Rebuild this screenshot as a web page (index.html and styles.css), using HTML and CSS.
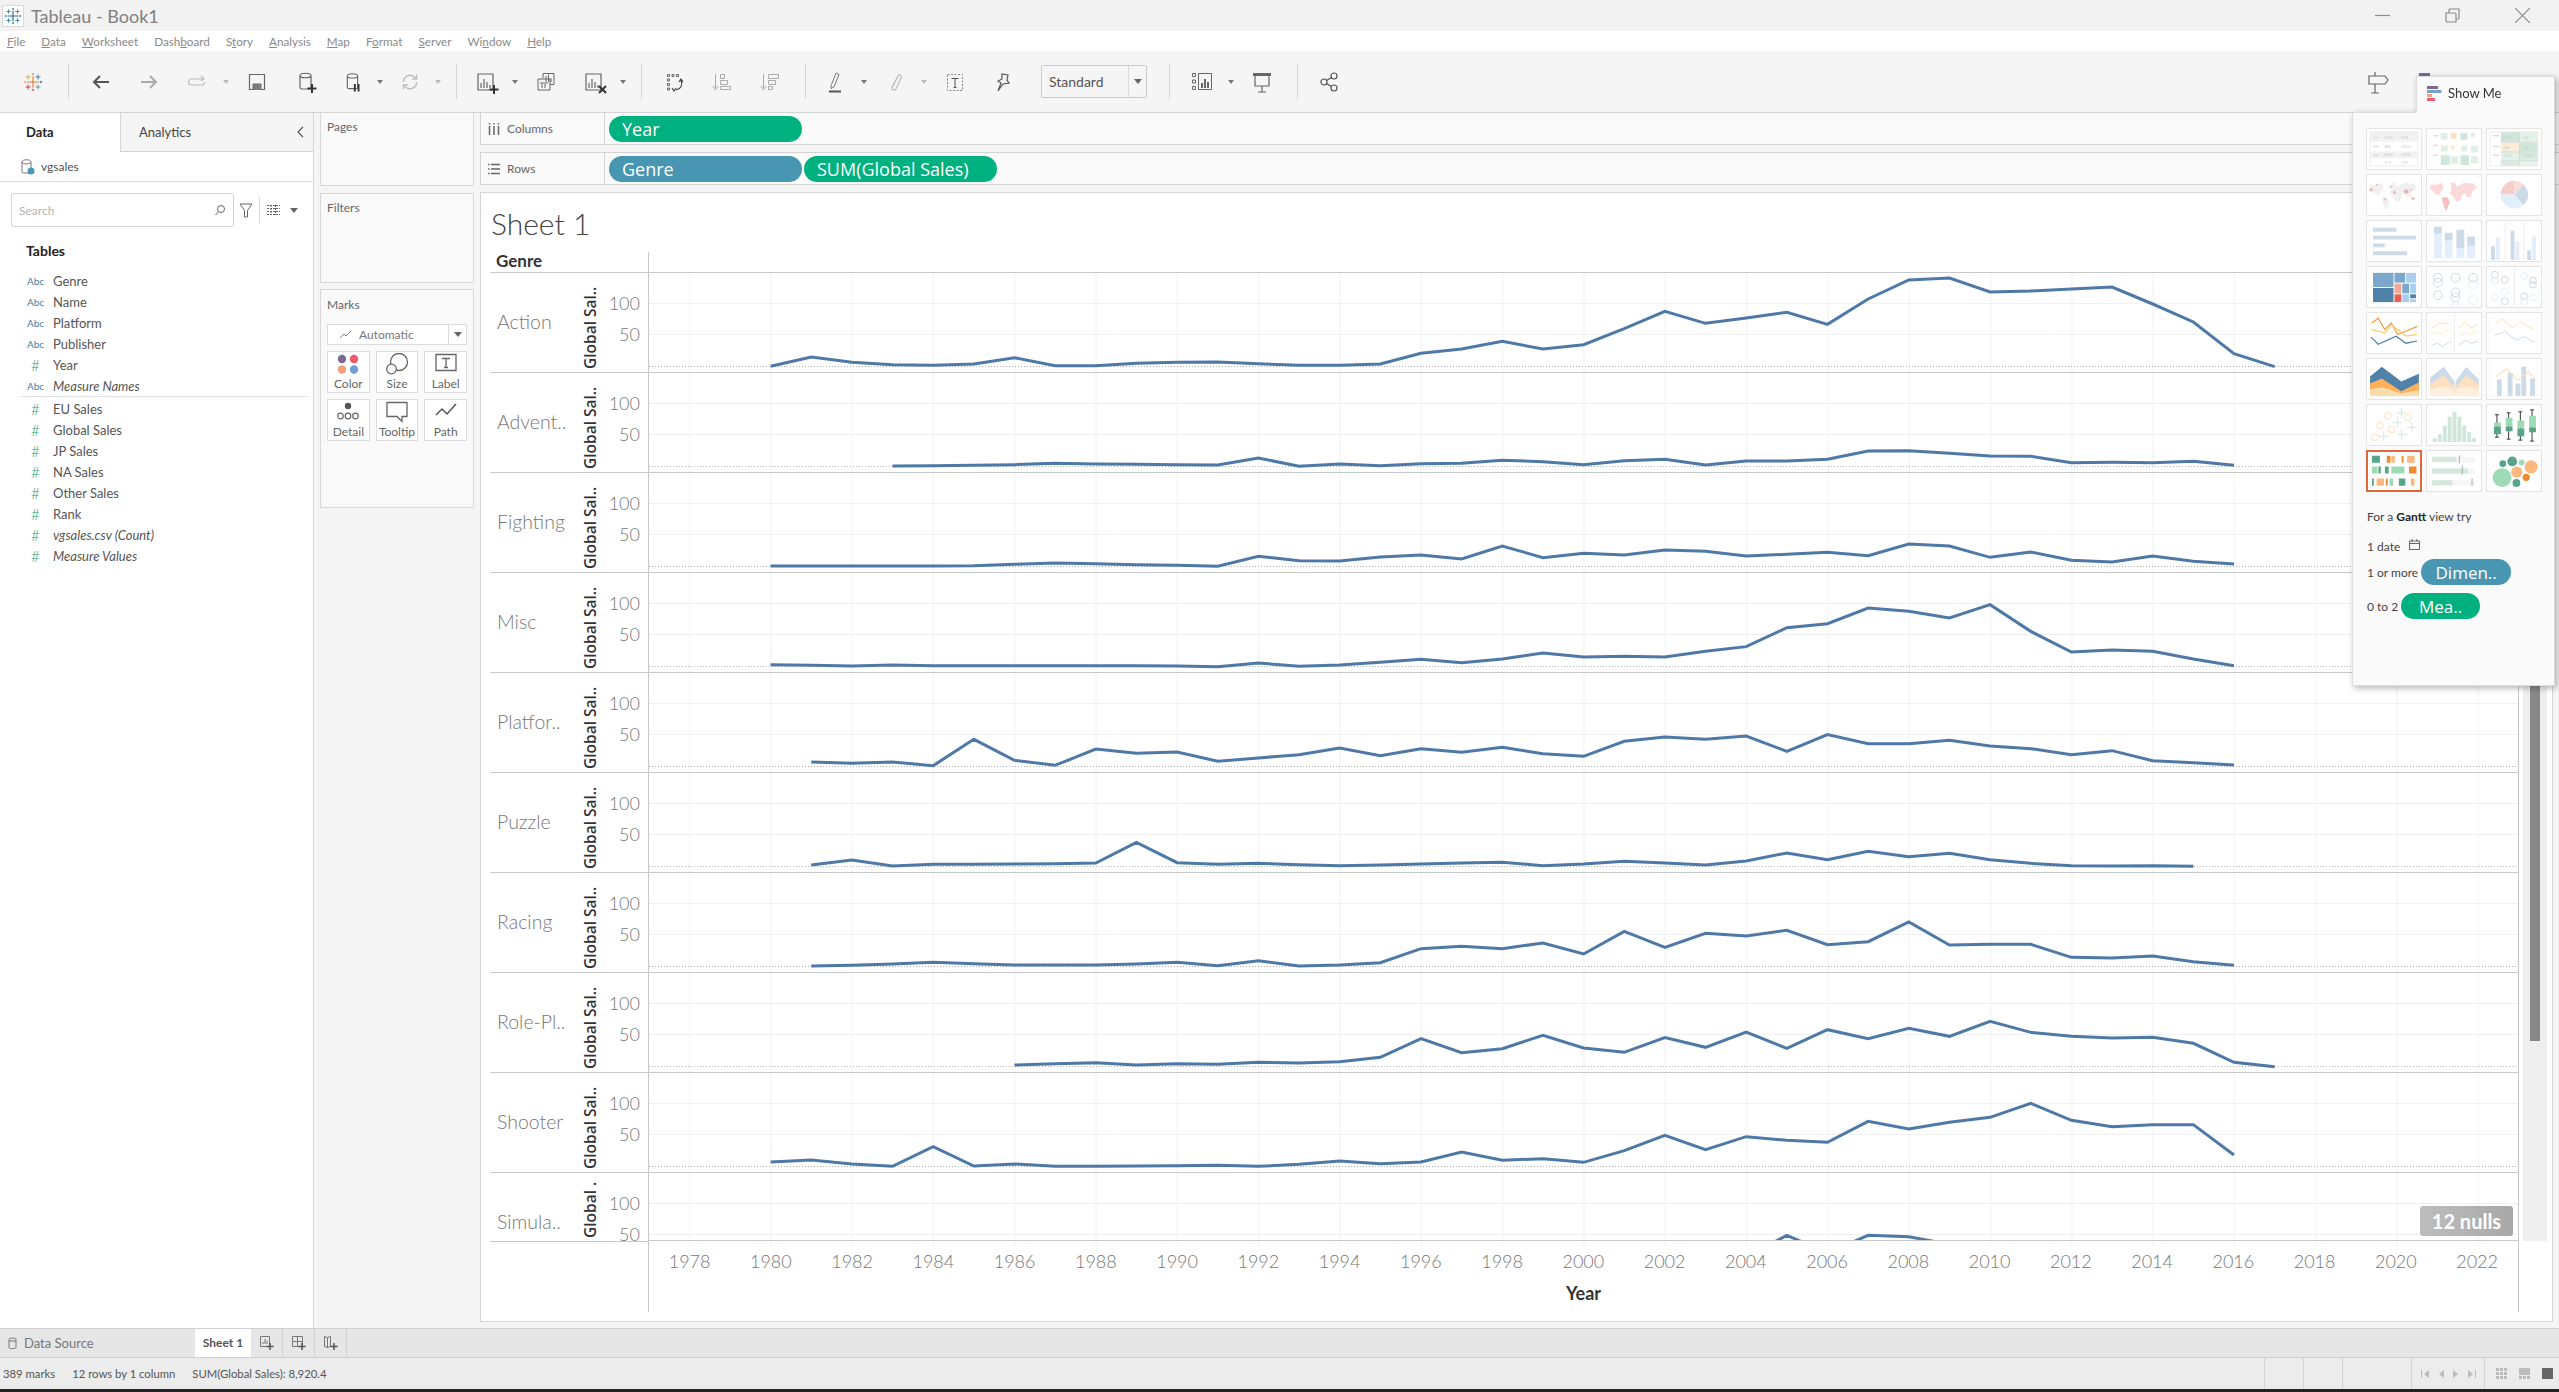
FILE: index.html
```html
<!DOCTYPE html>
<html lang="en">

<head>
    <meta charset="UTF-8">
    <title>Tableau - Book1</title>
    <link rel="stylesheet" href="styles.css">
</head>

<body>
    <svg class="defs" width="0" height="0">
        <symbol id="logo-blue" viewBox="0 0 24 24">
            <path d="M12 5v14M5 12h14" stroke="#2f6f9f" stroke-width="1.6" />
            <path d="M6 3v6M3 6h6M18 3v6M15 6h6M6 15v6M3 18h6M18 15v6M15 18h6" stroke="#3f86ad" stroke-width="1.2" />
            <path d="M12 1v3M10.500 2.500h3M12 20v3M10.500 21.500h3M2.500 10.500v3M1 12h3M21.500 10.500v3M20 12h3" stroke="#2f6f9f" stroke-width="1" />
        </symbol>
        <symbol id="logo-color" viewBox="0 0 24 24">
            <path d="M12 5v14M5 12h14" stroke="#e8762b" stroke-width="1.3" />
            <path d="M6 3v6M3 6h6" stroke="#e8a13b" stroke-width="1" />
            <path d="M18 3v6M15 6h6" stroke="#2f6f9f" stroke-width="1" />
            <path d="M6 15v6M3 18h6" stroke="#c72037" stroke-width="1" />
            <path d="M18 15v6M15 18h6" stroke="#5b879b" stroke-width="1" />
            <path d="M12 1v3M10.500 2.500h3" stroke="#7099a6" stroke-width=".8" />
            <path d="M12 20v3M10.500 21.500h3" stroke="#c72037" stroke-width=".8" />
            <path d="M2.500 10.500v3M1 12h3" stroke="#eb9129" stroke-width=".8" />
            <path d="M21.500 10.500v3M20 12h3" stroke="#1f447a" stroke-width=".8" />
        </symbol>
        <symbol id="cyl" viewBox="0 0 32 32">
            <path d="M11 9.500c0-3 11-3 11 0v12c0 1-1 1.500-2 1.500h-7c-1 0-2-.5-2-1.500zM11 9.500c0 3 11 3 11 0" fill="none" stroke="#666" stroke-width="1.200" />
        </symbol>
        <symbol id="chartbox" viewBox="0 0 32 32">
            <path d="M8 8h15v16H8z" fill="none" stroke="#666" stroke-width="1.200" />
            <path d="M11 22v-5M14 22v-9M17 22v-6M20 22v-3" stroke="#666" stroke-width="1.200" />
        </symbol>
    </svg>

    <header class="titlebar">
        <span class="titlebar__icon"><svg width="18" height="18"><use href="#logo-blue" /></svg></span>
        <span class="titlebar__text">Tableau - Book1</span>
        <div class="winctl">
            <svg width="15" height="15" viewBox="0 0 15 15"><path d="M0 7.500h15" stroke="#8a8a8a" stroke-width="1.200" /></svg>
            <svg width="15" height="15" viewBox="0 0 15 15"><path d="M1 5h9a1 1 0 0 1 1 1v8H2a1 1 0 0 1-1-1zM4 5V2a1 1 0 0 1 1-1h9v9a1 1 0 0 1-1 1h-2" fill="none" stroke="#8a8a8a" stroke-width="1.200" /></svg>
            <svg width="15" height="15" viewBox="0 0 15 15"><path d="M0 0l15 15M15 0L0 15" stroke="#8a8a8a" stroke-width="1.200" /></svg>
        </div>
    </header>

    <nav class="menubar">
        <span><u>F</u>ile</span>
        <span><u>D</u>ata</span>
        <span><u>W</u>orksheet</span>
        <span>Dash<u>b</u>oard</span>
        <span>S<u>t</u>ory</span>
        <span><u>A</u>nalysis</span>
        <span><u>M</u>ap</span>
        <span>F<u>o</u>rmat</span>
        <span><u>S</u>erver</span>
        <span>Wi<u>n</u>dow</span>
        <span><u>H</u>elp</span>
    </nav>

    <div class="toolbar">
        <span class="tool"><svg width="20" height="20"><use href="#logo-color" /></svg></span>
        <i class="sep"></i>
        <span class="tool"><svg width="32" height="32" viewBox="0 0 32 32"><path d="M24 16H9M15 10l-6 6 6 6" fill="none" stroke="#555" stroke-width="2" /></svg></span>
        <span class="tool"><svg width="32" height="32" viewBox="0 0 32 32"><path d="M8 16h15M17 10l6 6-6 6" fill="none" stroke="#aaa" stroke-width="2" /></svg></span>
        <span class="tool tool--menu">
            <svg width="32" height="32" viewBox="0 0 32 32"><path d="M22 13H10.500a2.500 2.500 0 0 0 0 6h11a2.500 2.500 0 0 0 2-3M20 10l3 3-3 2" fill="none" stroke="#bbb" stroke-width="1.200" /></svg>
            <b class="caret caret--off"></b>
        </span>
        <span class="tool"><svg width="32" height="32" viewBox="0 0 32 32"><path d="M8.500 8.500h15v15h-15z" fill="none" stroke="#666" stroke-width="1.200" /><path d="M12 24v-6h8v6M14 24v-4h3v4" fill="#888" stroke="#666" /></svg></span>
        <span class="tool"><svg width="32" height="32" viewBox="0 0 32 32"><use href="#cyl" /><path d="M23 18v9M18.500 22.500h9" stroke="#333" stroke-width="2" /></svg></span>
        <span class="tool tool--menu tool--short">
            <svg width="32" height="32" viewBox="0 0 32 32"><use href="#cyl" /><path d="M19 18v8M23 18v8" stroke="#333" stroke-width="2" /><path d="M18 18h7v9h-7z" fill="none" /></svg>
            <b class="caret"></b>
        </span>
        <span class="tool tool--menu tool--short">
            <svg width="32" height="32" viewBox="0 0 32 32"><path d="M9 16a7 7 0 0 1 12-5l2 2M23 16a7 7 0 0 1-12 5l-2-2M23 8v5h-5M9 24v-5h5" fill="none" stroke="#bbb" stroke-width="1.400" /></svg>
            <b class="caret caret--off"></b>
        </span>
        <i class="sep sep--tight"></i>
        <span class="tool tool--menu">
            <svg width="32" height="32" viewBox="0 0 32 32"><use href="#chartbox" /><path d="M24 19v9M19.500 23.500h9" stroke="#333" stroke-width="2" /></svg>
            <b class="caret"></b>
        </span>
        <span class="tool"><svg width="32" height="32" viewBox="0 0 32 32"><path d="M13 12V7.500h11v11h-4M8 13h12v11H8zM10 17h8M12 18v4M15 18v4" fill="none" stroke="#666" stroke-width="1" /><path d="M16 16V10M18.500 16V8.500M21 16v-4" stroke="#666" /></svg></span>
        <span class="tool tool--menu">
            <svg width="32" height="32" viewBox="0 0 32 32"><use href="#chartbox" /><path d="M21 20l7 7M28 20l-7 7" stroke="#333" stroke-width="2" /></svg>
            <b class="caret"></b>
        </span>
        <i class="sep"></i>
        <span class="tool"><svg width="32" height="32" viewBox="0 0 32 32"><path d="M9.500 8.500h2v2h-2zM14 8.500h2v2h-2zM18.500 8.500h2v2h-2zM9.500 13h2v2h-2zM9.500 17.500h2v2h-2zM9.500 22h2v2h-2z" fill="none" stroke="#666" /><path d="M23 14c2 5 0 9-5 10M14 22l2 3 2-3M21 16l2-3 2 3" fill="none" stroke="#444" stroke-width="1.200" /></svg></span>
        <span class="tool"><svg width="32" height="32" viewBox="0 0 32 32"><path d="M9.500 8v14M7 20l2.500 4L12 20" fill="none" stroke="#aaa" /><path d="M14.500 8.500h4v4h-4zM14.500 14.500h7v4h-7zM14.500 20.500h10v3h-10z" fill="none" stroke="#aaa" /></svg></span>
        <span class="tool"><svg width="32" height="32" viewBox="0 0 32 32"><path d="M9.500 8v14M7 20l2.500 4L12 20" fill="none" stroke="#aaa" /><path d="M14.500 8.500h10v4h-10zM14.500 14.500h7v4h-7zM14.500 20.500h4v3h-4z" fill="none" stroke="#aaa" /></svg></span>
        <i class="sep sep--tight"></i>
        <span class="tool tool--menu">
            <svg width="32" height="32" viewBox="0 0 32 32"><path d="M12 20l5-13 3 1.500-5 12.500-3 1.500z" fill="none" stroke="#777" /><path d="M10 24.500h12v2H10z" fill="#555" /></svg>
            <b class="caret"></b>
        </span>
        <span class="tool tool--menu">
            <svg width="32" height="32" viewBox="0 0 32 32"><path d="M19 10l-6 11c-1 3 3 4 4 2l5-11c1-3-2-4-3-2l-5 10" fill="none" stroke="#bbb" stroke-width="1.200" /></svg>
            <b class="caret caret--off"></b>
        </span>
        <span class="tool"><svg width="32" height="32" viewBox="0 0 32 32"><path d="M8.500 8.500h15v16h-15z" fill="none" stroke="#888" stroke-dasharray="2 1.500" /><path d="M12.500 12.500h7M16 12.500v9M14.500 21.500h3" fill="none" stroke="#555" /></svg></span>
        <span class="tool"><svg width="32" height="32" viewBox="0 0 32 32"><path d="M15 8l6 1-1 5 2 3-6 1-5 7 3-8-3-2 4-2z" fill="none" stroke="#555" stroke-width="1.200" /></svg></span>
        <div class="fit-select"><span class="fit-select__value">Standard</span><span class="fit-select__btn"><b class="caret caret--big"></b></span></div>
        <i class="sep sep--wide"></i>
        <span class="tool tool--menu">
            <svg width="32" height="32" viewBox="0 0 32 32"><path d="M6.500 7.500h3v3h-3zM6.500 14h3v3h-3zM6.500 20.500h3v3h-3zM12.500 7.500h13v16h-13z" fill="none" stroke="#666" /><path d="M16 22v-5M19 22v-9M22 22v-6" stroke="#666" stroke-width="2" /></svg>
            <b class="caret"></b>
        </span>
        <span class="tool"><svg width="32" height="32" viewBox="0 0 32 32"><path d="M7 7h18v3H7z" fill="#666" /><path d="M9 10v10h14V10M16 20v6M12 26h8" fill="none" stroke="#666" stroke-width="1.200" /></svg></span>
        <i class="sep sep--wide"></i>
        <span class="tool"><svg width="32" height="32" viewBox="0 0 32 32"><g fill="none" stroke="#555" stroke-width="1.200"><circle cx="10" cy="16" r="3" /><circle cx="20" cy="10" r="3" /><circle cx="20" cy="22" r="3" /><path d="M12.500 14.500l5-3M12.500 17.500l5 3" /></g></svg></span>
        <span class="tool tool--push"><svg width="32" height="32" viewBox="0 0 32 32"><path d="M7 10h16l3 4-3 4H7zM13 18v9M9 27h8M13 10V6" fill="none" stroke="#666" stroke-width="1.200" /></svg></span>
        <i class="peek"></i>
    </div>

    <main class="workspace">
        <aside class="datapane">
            <div class="datapane__tabs">
                <div class="ptab ptab--on">Data</div>
                <div class="ptab">Analytics<svg class="ptab__chev" width="8" height="12" viewBox="0 0 8 12"><path d="M6 1L1 6l5 5" fill="none" stroke="#555" stroke-width="1.200" /></svg></div>
            </div>
            <div class="source">
                <svg width="14" height="18" viewBox="0 0 14 18"><path d="M1 4c0-3 9-3 9 0v10c0 1-1 1-2 1H3c-1 0-2 0-2-1zM1 4c0 2.500 9 2.500 9 0" fill="none" stroke="#777" /><circle cx="10" cy="13" r="3.500" fill="#4996b2" /></svg>
                <span>vgsales</span>
            </div>
            <div class="searchrow">
                <div class="search">
                    <span>Search</span>
                    <svg width="12" height="12" viewBox="0 0 12 12"><circle cx="7" cy="5" r="3.500" fill="none" stroke="#666" /><path d="M4.500 7.500L1.500 11" stroke="#666" /></svg>
                </div>
                <svg class="search__filter" width="14" height="15" viewBox="0 0 14 15"><path d="M1 1h12L8.500 7.500V14h-3V7.500z" fill="none" stroke="#666" /></svg>
                <i class="searchrow__sep"></i>
                <svg width="13" height="10" viewBox="0 0 13 10"><path d="M0 .5h13M0 3.500h13M0 6.500h13M0 9.500h13M4 0v10M8.500 0v10" stroke="#666" stroke-dasharray="2 1" /></svg>
                <b class="caret caret--big searchrow__caret"></b>
            </div>
            <h3 class="tables-title">Tables</h3>
            <ul class="fields">
                <li><span class="fld fld--dim">Abc</span>Genre</li>
                <li><span class="fld fld--dim">Abc</span>Name</li>
                <li><span class="fld fld--dim">Abc</span>Platform</li>
                <li><span class="fld fld--dim">Abc</span>Publisher</li>
                <li><span class="fld fld--num">#</span>Year</li>
                <li><span class="fld fld--dim">Abc</span><em>Measure Names</em></li>
                <li class="fields__rule"></li>
                <li><span class="fld fld--num">#</span>EU Sales</li>
                <li><span class="fld fld--num">#</span>Global Sales</li>
                <li><span class="fld fld--num">#</span>JP Sales</li>
                <li><span class="fld fld--num">#</span>NA Sales</li>
                <li><span class="fld fld--num">#</span>Other Sales</li>
                <li><span class="fld fld--num">#</span>Rank</li>
                <li><span class="fld fld--num">#</span><em>vgsales.csv (Count)</em></li>
                <li><span class="fld fld--num">#</span><em>Measure Values</em></li>
            </ul>
        </aside>

        <section class="cards">
            <div class="card card--pages">Pages</div>
            <div class="card card--filters">Filters</div>
            <div class="card card--marks">
                Marks
                <div class="marktype">
                    <svg width="14" height="10" viewBox="0 0 14 10"><path d="M1 8l4-4 2 2 5-5" fill="none" stroke="#888" /></svg>
                    <span class="marktype__name">Automatic</span>
                    <span class="marktype__btn"><b class="caret caret--big"></b></span>
                </div>
                <div class="markgrid">
                    <div class="mark">
                        <svg width="24" height="22" viewBox="0 0 24 22"><circle cx="6" cy="6" r="4.200" fill="#7a6a96" /><circle cx="18" cy="6" r="4.200" fill="#f0596e" /><circle cx="6" cy="16.500" r="4.200" fill="#f3a07a" /><circle cx="18" cy="16.500" r="4.200" fill="#6f9fd0" /></svg>
                        Color
                    </div>
                    <div class="mark">
                        <svg width="24" height="22" viewBox="0 0 24 22"><circle cx="14" cy="9" r="8.500" fill="none" stroke="#666" stroke-width="1.300" /><circle cx="6.500" cy="16" r="4.800" fill="#fff" stroke="#666" stroke-width="1.300" /></svg>
                        Size
                    </div>
                    <div class="mark">
                        <svg width="24" height="22" viewBox="0 0 24 22"><path d="M2 1.500h20v16H2z" fill="none" stroke="#666" stroke-width="1.300" /><path d="M8 5.500h8M12 5.500v9M10 14.500h4" fill="none" stroke="#666" stroke-width="1.300" /></svg>
                        Label
                    </div>
                    <div class="mark">
                        <svg width="24" height="22" viewBox="0 0 24 22"><circle cx="12" cy="5" r="3.200" fill="#555" /><g fill="none" stroke="#666" stroke-width="1.200"><circle cx="4.500" cy="15" r="2.800" /><circle cx="12" cy="15" r="2.800" /><circle cx="19.500" cy="15" r="2.800" /></g></svg>
                        Detail
                    </div>
                    <div class="mark">
                        <svg width="24" height="22" viewBox="0 0 24 22"><path d="M2 1.500h20v14h-5v5l-5-5H2z" fill="none" stroke="#666" stroke-width="1.300" /></svg>
                        Tooltip
                    </div>
                    <div class="mark">
                        <svg width="24" height="22" viewBox="0 0 24 22"><path d="M2 14l6-6 5 5 9-10" fill="none" stroke="#555" stroke-width="1.500" /></svg>
                        Path
                    </div>
                </div>
            </div>
        </section>

        <section class="main">
            <div class="shelf shelf--cols">
                <div class="shelf__label">
                    <svg width="12" height="12" viewBox="0 0 12 12"><path d="M1.500 0v1.500M1.500 3v9M6 0v1.500M6 3v9M10.500 0v1.500M10.500 3v9" stroke="#666" stroke-width="1.500" /></svg>
                    Columns
                </div>
                <span class="pill pill--mea">Year</span>
            </div>
            <div class="shelf shelf--rows">
                <div class="shelf__label">
                    <svg width="12" height="12" viewBox="0 0 12 12"><path d="M0 1.500h1.500M3 1.500h9M0 6h1.500M3 6h9M0 10.500h1.500M3 10.500h9" stroke="#666" stroke-width="1.500" /></svg>
                    Rows
                </div>
                <span class="pill pill--dim">Genre</span>
                <span class="pill pill--mea">SUM(Global Sales)</span>
            </div>

            <div class="view">
                <div class="sheet">
                    <h1 class="sheet__title">Sheet 1</h1>
                    <div class="chart">
                        <div class="heads">
                            <div class="heads__top">Genre</div>
                            <div class="hrow"><span class="hrow__name">Action</span><span class="hrow__axis">Global Sal..</span><span class="hrow__ticks">100<br>50</span></div>
                            <div class="hrow"><span class="hrow__name">Advent..</span><span class="hrow__axis">Global Sal..</span><span class="hrow__ticks">100<br>50</span></div>
                            <div class="hrow"><span class="hrow__name">Fighting</span><span class="hrow__axis">Global Sal..</span><span class="hrow__ticks">100<br>50</span></div>
                            <div class="hrow"><span class="hrow__name">Misc</span><span class="hrow__axis">Global Sal..</span><span class="hrow__ticks">100<br>50</span></div>
                            <div class="hrow"><span class="hrow__name">Platfor..</span><span class="hrow__axis">Global Sal..</span><span class="hrow__ticks">100<br>50</span></div>
                            <div class="hrow"><span class="hrow__name">Puzzle</span><span class="hrow__axis">Global Sal..</span><span class="hrow__ticks">100<br>50</span></div>
                            <div class="hrow"><span class="hrow__name">Racing</span><span class="hrow__axis">Global Sal..</span><span class="hrow__ticks">100<br>50</span></div>
                            <div class="hrow"><span class="hrow__name">Role-Pl..</span><span class="hrow__axis">Global Sal..</span><span class="hrow__ticks">100<br>50</span></div>
                            <div class="hrow"><span class="hrow__name">Shooter</span><span class="hrow__axis">Global Sal..</span><span class="hrow__ticks">100<br>50</span></div>
                            <div class="hrow hrow--last"><span class="hrow__name">Simula..</span><span class="hrow__axis">Global .</span><span class="hrow__ticks">100<br>50</span></div>
                        </div>
                        <div class="plot">
                            <div class="plot__top"></div>
                            <div class="plot__body">
                                <svg class="plot__svg" width="1869" height="969" viewBox="0 0 1869 969">
                                    <defs>
                                        <pattern id="vgrid" width="81.3" height="974" patternUnits="userSpaceOnUse">
                                            <path d="M40.650 0v974" stroke="#f0f0f0" />
                                        </pattern>
                                        <pattern id="hgrid" width="1869" height="100" patternUnits="userSpaceOnUse">
                                            <path d="M0 31.500h1869M0 62.500h1869" stroke="#f0f0f0" />
                                            <path d="M0 94.500h1869" stroke="#b5b5b5" stroke-dasharray="1 2" />
                                            <path d="M0 .5h1869" stroke="#c8c8c8" />
                                        </pattern>
                                        <clipPath id="plotclip"><rect width="1869" height="968" /></clipPath>
                                    </defs>
                                    <rect width="1869" height="974" fill="url(#vgrid)" />
                                    <rect width="1869" height="969" fill="url(#hgrid)" />
                                    <path d="M0 968.500h1869" stroke="#c8c8c8" />
                                    <g class="lines" clip-path="url(#plotclip)">
                                        <!-- x is years after 1980, y is in thirds of a pixel under the row top -->
                                        <polyline transform="translate(121.600 0) scale(40.650 .3333)" points="0,283 1,255 2,271 3,278 4,280 5,276 6,257 7,281 8,281 9,274 10,271 11,270 12,275 13,280 14,280 15,276 16,244 17,231 18,208 19,231 20,218 21,170 22,118 23,154 24,138 25,121 26,157 27,81 28,24 29,18 30,60 31,57 32,51 33,45 34,96 35,150 36,245 37,284" />
                                        <polyline transform="translate(121.600 100) scale(40.650 .3333)" points="3,282 4,281 5,280 6,278 7,274 8,276 9,277 10,278 11,279 12,258 13,283 14,276 15,281 16,275 17,274 18,265 19,269 20,278 21,266 22,262 23,279 24,267 25,267 26,262 27,237 28,236 29,244 30,252 31,253 32,272 33,271 34,272 35,268 36,280" />
                                        <polyline transform="translate(121.600 200) scale(40.650 .3333)" points="0,282 1,282 2,282 3,282 4,282 5,281 6,277 7,273 8,275 9,278 10,280 11,283 12,253 13,266 14,267 15,255 16,249 17,261 18,222 19,257 20,244 21,249 22,234 23,238 24,252 25,247 26,241 27,251 28,216 29,222 30,256 31,240 32,265 33,270 34,252 35,268 36,276" />
                                        <polyline transform="translate(121.600 300) scale(40.650 .3333)" points="0,278 1,280 2,282 3,279 4,281 5,281 6,281 7,281 8,281 9,281 10,282 11,284 12,273 13,283 14,279 15,271 16,262 17,272 18,261 19,243 20,255 21,253 22,255 23,238 24,224 25,167 26,155 27,108 28,118 29,138 30,98 31,178 32,240 33,234 34,238 35,261 36,281" />
                                        <polyline transform="translate(121.600 400) scale(40.650 .3333)" points="1,270 2,274 3,270 4,281 5,202 6,265 7,280 8,231 9,244 10,240 11,268 12,258 13,248 14,228 15,251 16,230 17,241 18,226 19,245 20,253 21,208 22,195 23,202 24,192 25,238 26,188 27,215 28,215 29,205 30,222 31,230 32,248 33,236 34,266 35,272 36,279" />
                                        <polyline transform="translate(121.600 500) scale(40.650 .3333)" points="1,279 2,264 3,282 4,277 5,277 6,276 7,275 8,273 9,211 10,272 11,277 12,274 13,278 14,281 15,279 16,276 17,273 18,271 19,281 20,276 21,268 22,273 23,279 24,267 25,243 26,263 27,238 28,254 29,244 30,263 31,274 32,281 33,282 34,281 35,283" />
                                        <polyline transform="translate(121.600 600) scale(40.650 .3333)" points="1,282 2,280 3,276 4,271 5,275 6,279 7,279 8,279 9,276 10,271 11,281 12,266 13,282 14,279 15,272 16,230 17,223 18,230 19,213 20,246 21,178 22,226 23,184 24,192 25,175 26,218 27,209 28,150 29,219 30,217 31,217 32,256 33,258 34,252 35,269 36,280" />
                                        <polyline transform="translate(121.600 700) scale(40.650 .3333)" points="6,279 7,275 8,272 9,279 10,275 11,277 12,271 13,273 14,269 15,256 16,200 17,242 18,230 19,190 20,228 21,241 22,197 23,226 24,180 25,229 26,173 27,200 28,169 29,193 30,148 31,181 32,193 33,198 34,196 35,214 36,271 37,284" />
                                        <polyline transform="translate(121.600 800) scale(40.650 .3333)" points="0,270 1,264 2,276 3,283 4,224 5,282 6,276 7,283 8,283 9,282 10,281 11,280 12,283 13,277 14,267 15,275 16,270 17,240 18,265 19,260 20,271 21,236 22,190 23,233 24,194 25,205 26,211 27,148 28,171 29,151 30,136 31,94 32,145 33,164 34,158 35,158 36,249" />
                                        <polyline transform="translate(121.600 900) scale(40.650 .3333)" points="24,255 25,190 26,243 27,190 28,194 29,217" />
                                    </g>
                                </svg>
                                <span class="nulls">12 nulls</span>
                            </div>
                            <div class="axis">
                                <div class="axis__years">
                                    <span>1978</span><span>1980</span><span>1982</span><span>1984</span><span>1986</span><span>1988</span><span>1990</span><span>1992</span><span>1994</span><span>1996</span><span>1998</span><span>2000</span><span>2002</span><span>2004</span><span>2006</span><span>2008</span><span>2010</span><span>2012</span><span>2014</span><span>2016</span><span>2018</span><span>2020</span><span>2022</span>
                                </div>
                                <div class="axis__title">Year</div>
                            </div>
                        </div>
                    </div>
                </div>
                <div class="vscroll"><div class="vscroll__thumb"></div></div>
            </div>
        </section>

        <aside class="showme">
            <div class="showme__tab">
                <svg width="15" height="15" viewBox="0 0 15 15"><path d="M0 0h11v3H0z" fill="#7a6a96" /><path d="M0 4h14.500v3H0z" fill="#7ba0cc" /><path d="M0 8h5v3H0z" fill="#f3a07a" /><path d="M0 12h8v3H0z" fill="#f0596e" /></svg>
                Show Me
            </div>
            <div class="showme__body">
                <div class="thumbs">
                    <div class="thumb">
                        <svg viewBox="0 0 55 41"><path d="M3 3h49v10H3zM3 23h49v7H3z" fill="#f2f2f2" /><path d="M3 3h49v35H3z" fill="none" stroke="#ececec" /><path d="M6 9h6M6 18h6M6 27h6" stroke="#ddd" stroke-width="1.500" /><g fill="#c9c9c9" font-size="4" font-family="Lato, sans-serif"><text x="17" y="10">1234</text><text x="35" y="10">678</text><text x="17" y="19">368</text><text x="35" y="19">3014</text><text x="17" y="28">2620</text><text x="35" y="28">2598</text><text x="18" y="36">971</text><text x="35" y="36">322</text></g></svg>
                    </div>
                    <div class="thumb">
                        <svg viewBox="0 0 55 41"><path d="M6 7h5M6 17h5M6 27h5" stroke="#ddd" stroke-width="1.500" /><g fill="#e0f0e6"><path d="M14 4h7v7h-7zM14 17h7v6h-7zM35 17h6v6h-6zM45 17h7v7h-7zM24 28h8v8h-8zM45 28h7v7h-7z" /></g><g fill="#cfe6da"><path d="M34 4h7v7h-7zM14 27h9v10h-9zM34 27h9v10h-9z" /></g><path d="M24 4h6v6h-6z" fill="#fde0c0" /><path d="M24 17h4v4h-4z" fill="#fdeacb" /><path d="M45 4h4v4h-4z" fill="#e0f0e6" /></svg>
                    </div>
                    <div class="thumb">
                        <svg viewBox="0 0 55 41"><path d="M14 3h38v35H14z" fill="#e5f2ea" /><path d="M14 3h19v10H14zM33 14h19v9H33z" fill="#cfe6da" /><path d="M14 14h19v9H14z" fill="#feecd6" /><path d="M14 33h19v5H14zM33 23h19v8H33z" fill="#d9ebe1" /><path d="M3 3h49v35H3z" fill="none" stroke="#ececec" /><path d="M6 7h6M6 18h6M6 27h6" stroke="#ddd" stroke-width="1.500" /><path d="M14 13.500h38M14 23.500h38M14 32.500h38M33 3v35" stroke="#c9c9c9" stroke-width=".5" /><g fill="#c3d2c8" font-size="4" font-family="Lato, sans-serif"><text x="16" y="10">1234</text><text x="36" y="10">546</text><text x="16" y="20">368</text><text x="36" y="20">310</text><text x="16" y="29">2620</text><text x="36" y="29">51690</text></g></svg>
                    </div>
                    <div class="thumb">
                        <svg viewBox="0 0 55 41"><path id="world" d="M3 10h6l6-2 2 5-3 5-2 3-4-2-5-5zM15 23h6l2 5-3 8-2-2-2-6zM24 8h5l1 4 8-4 10 1 3 4-5 4-1 5-4 1-2-4-4 2-1 5-4 2-3-6-4-3 2-6z" fill="#f0f0f0" /><g fill="#eeb3b3"><circle cx="4" cy="15" r="1.800" /><circle cx="24" cy="12" r="1.200" /><circle cx="40" cy="17" r="2.400" /><circle cx="45" cy="15" r="1" /><circle cx="10" cy="10" r="1" /><circle cx="28" cy="18" r="1.500" /><circle cx="47" cy="24" r="1.500" /><circle cx="18" cy="25" r="1.100" /></g></svg>
                    </div>
                    <div class="thumb">
                        <svg viewBox="0 0 55 41"><path d="M3 10h6l6-2 2 5-3 5-2 3-4-2-5-5zM15 23h6l2 5-3 8-2-2-2-6zM24 8h5l1 4 8-4 10 1 3 4-5 4-1 5-4 1-2-4-4 2-1 5-4 2-3-6-4-3 2-6z" fill="#fbd9d9" /><path d="M15 23h6l2 5-3 8-2-2-2-6z" fill="#f5c0c0" /></svg>
                    </div>
                    <div class="thumb">
                        <svg viewBox="0 0 55 41"><path d="M28 20V6a14 14 0 0 0-14 14z" fill="#f6cdc8" /><path d="M28 20V6a14 14 0 0 1 9 3.500z" fill="#fbdcd9" /><path d="M28 20l9-10.500A14 14 0 0 1 37 31z" fill="#cddbe8" /><path d="M28 20l9 11A14 14 0 0 1 14 20z" fill="#e2eefa" /></svg>
                    </div>
                    <div class="thumb">
                        <svg viewBox="0 0 55 41"><path d="M6 7h24v4H6zM6 15h44v4H6zM6 23h12v4H6zM6 31h35v4H6z" fill="#cddbe8" /></svg>
                    </div>
                    <div class="thumb">
                        <svg viewBox="0 0 55 41"><path d="M7 13h8v25H7zM18 20h8v18h-8zM30 25h8v13h-8zM41 26h8v12h-8z" fill="#e2eefa" /><path d="M7 6h8v7H7zM18 12h8v8h-8zM30 9h8v19h-8zM41 16h8v10h-8z" fill="#cddbe8" /></svg>
                    </div>
                    <div class="thumb">
                        <svg viewBox="0 0 55 41"><path d="M18.500 1v39M37.500 1v39" stroke="#eee" /><path d="M4 26h4v14H4zM24 10h4v30h-4zM41 30h4v10h-4z" fill="#cddbe8" /><path d="M9 17h4v23H9zM29 21h4v19h-4zM46 16h4v24h-4z" fill="#e2eefa" /></svg>
                    </div>
                    <div class="thumb">
                        <svg viewBox="0 0 55 41"><path d="M6 6h21v14.500H6z" fill="#7ba7cb" /><path d="M6 21.500h21V36H6z" fill="#4f81a9" /><path d="M28 6h11v10H28z" fill="#7ba7cb" /><path d="M40 6h10v10H40z" fill="#a9cfee" /><path d="M28 17h7v10h-7z" fill="#f4a59a" /><path d="M28 28h7v8h-7z" fill="#e26052" /><path d="M36 17h7v10h-7z" fill="#7ba7cb" /><path d="M44 17h6v10h-6z" fill="#a9cfee" /><path d="M36 28h7v8h-7z" fill="#a9cfee" /><path d="M44 28h6v4h-6z" fill="#4f81a9" /><path d="M44 33h6v3h-6z" fill="#a9cfee" /></svg>
                    </div>
                    <div class="thumb">
                        <svg viewBox="0 0 55 41"><g fill="none" stroke="#c6d7e6" stroke-width="1"><circle cx="11" cy="11" r="4.500" /><circle cx="11" cy="16" r="4.500" /><circle cx="29" cy="11" r="4.500" /><circle cx="11" cy="29" r="4.500" /><circle cx="29" cy="26" r="4.500" /><circle cx="29" cy="31" r="4.500" /><circle cx="47" cy="11" r="4.500" /></g><g fill="none" stroke="#e2eefa" stroke-width="1"><circle cx="47" cy="18" r="4.500" /><circle cx="47" cy="34" r="4.500" /><circle cx="29" cy="39" r="3.500" /></g></svg>
                    </div>
                    <div class="thumb">
                        <svg viewBox="0 0 55 41"><path d="M28 0v41" stroke="#eee" /><g fill="none" stroke="#c6d7e6"><circle cx="8" cy="8" r="3.500" /><circle cx="18" cy="13" r="3.500" /><circle cx="18" cy="35" r="3.500" /><circle cx="47" cy="14" r="3.500" /><circle cx="47" cy="18" r="3.500" /><circle cx="38" cy="30" r="3.500" /></g><g fill="none" stroke="#e2eefa"><circle cx="8" cy="14" r="3.500" /><circle cx="8" cy="31" r="3.500" /><circle cx="18" cy="25" r="3.500" /><circle cx="38" cy="9" r="3.500" /><circle cx="47" cy="31" r="3.500" /><circle cx="38" cy="36" r="3.500" /></g></svg>
                    </div>
                    <div class="thumb">
                        <svg viewBox="0 0 55 41"><g fill="none" stroke-width="1.300"><polyline points="4.700,10.300 11.300,5.300 18,17 24.700,10.300 31.300,22 39.700,18.700 51.300,13.700" stroke="#f2a33c" /><polyline points="4.700,17 18,20.300 24.700,12 39.700,23.700 51.300,22" stroke="#f7cb6d" /><polyline points="4,24.700 11.300,32 29.700,23.700 39.700,31 51.300,28.700" stroke="#4f81a9" /></g></svg>
                    </div>
                    <div class="thumb">
                        <svg viewBox="0 0 55 41"><path d="M28 0v41" stroke="#eee" /><g fill="none"><polyline points="4,16 12,11 24,11" stroke="#fde0c0" /><polyline points="32,16 39,9 45,15 52,12" stroke="#fde0c0" /><polyline points="4,22 10,20 16,22 24,14" stroke="#feeecd" /><polyline points="32,24 39,20 45,22 52,19" stroke="#feeecd" /><polyline points="4,34 10,31 16,34 24,29" stroke="#cddbe8" /><polyline points="32,33 39,28 45,31 52,29" stroke="#cddbe8" /></g></svg>
                    </div>
                    <div class="thumb">
                        <svg viewBox="0 0 55 41"><g fill="none"><polyline points="8,11 15,6 26,15 34,9 48,17" stroke="#fde0c0" /><polyline points="8,23 18,19 30,28 38,24 48,30" stroke="#cddbe8" /></g><path d="M2 4v34M51 4v34" stroke="#eee" stroke-dasharray="2 2" /></svg>
                    </div>
                    <div class="thumb">
                        <svg viewBox="0 0 55 41"><path d="M3 38V18L15 8l20 15 18-8v23z" fill="#4f81a9" /><path d="M3 38V25l12-5 20 13 18-9v14z" fill="#ffb05c" /><path d="M3 38v-7l12-2 20 6 18-3v6z" fill="#f8dcaa" /></svg>
                    </div>
                    <div class="thumb">
                        <svg viewBox="0 0 55 41"><path d="M3 38V19L17 8l11 15V38zM29 38V23L40 8l13 13v17z" fill="#cddbe8" /><path d="M3 38V26l14-9 11 12v9zM29 38v-9l11-12 13 9v12z" fill="#fde0c0" /><path d="M3 38v-7l14-3 11 3v7zM29 38v-7l11-3 13 3v7z" fill="#feeedd" /></svg>
                    </div>
                    <div class="thumb">
                        <svg viewBox="0 0 55 41"><path d="M10 21h5v17h-5zM21 14h5v24h-5zM29 25h5v13h-5zM35 8h5v30h-5zM44 20h5v18h-5z" fill="#cddbe8" /><polyline points="9,18 20,10 31,22 42,13 50,22" fill="none" stroke="#fde0c0" stroke-width="1.200" /><path d="M3 4v34M51 4v34" stroke="#eee" stroke-dasharray="2 2" /></svg>
                    </div>
                    <div class="thumb">
                        <svg viewBox="0 0 55 41"><g fill="none" stroke="#fde0c0"><circle cx="21" cy="11" r="3.500" /><circle cx="42" cy="13" r="3.500" /><circle cx="13" cy="21" r="3.500" /><circle cx="25" cy="25" r="3.500" /><circle cx="8" cy="33" r="3.500" /></g><path d="M35 3v10M30 8h10M31 13v10M26 18h10M46 18v10M41 23h10M35 25v10M30 30h10M17 27v10M12 32h10" stroke="#d3e7dc" /></svg>
                    </div>
                    <div class="thumb">
                        <svg viewBox="0 0 55 41"><path d="M6 34h4v4H6zM11 30h4v8h-4zM16 21h4v17h-4zM21 12h4v26h-4zM26 7h4v31h-4zM31 12h4v26h-4zM36 21h4v17h-4zM41 28h4v10h-4zM46 34h4v4h-4z" fill="#cfe6da" /></svg>
                    </div>
                    <div class="thumb">
                        <svg viewBox="0 0 55 41"><path d="M10 10v23M8 10h4M8 33h4M22 8v27M20 8h4M20 35h4M34 7v29M32 7h4M32 36h4M46 5v32M44 5h4M44 37h4" stroke="#333" /><path d="M7 18h7v4H7zM19 13h7v9h-7zM31 16h7v8h-7zM43 11h7v12h-7z" fill="#9ddab5" /><path d="M7 22h7v8H7zM19 22h7v5h-7zM31 24h7v8h-7zM43 23h7v5h-7z" fill="#57a586" /></svg>
                    </div>
                    <div class="thumb thumb--on">
                        <svg viewBox="0 0 55 41"><g fill="#57a586"><path d="M3.700 4h8.600v7.700H3.700zM10.700 15.700h2.600v7.600h-2.600zM17.700 15.700h4v7.600h-4zM3.700 28.700h2v7.600h-2zM32.700 28.700h7v7.600h-7z" /></g><g fill="#ef8b2c"><path d="M19.700 4h4v7.700h-4zM35.700 4h2v7.700h-2zM43.700 15.700h8v7.600h-8zM18.700 28.700h2v7.600h-2z" /></g><g fill="#fdb97d"><path d="M24.700 4h3.600v7.700h-3.600zM41.700 4h8v7.700h-8zM8.700 28.700h8v7.600h-8zM45.700 28.700h4v7.600h-4z" /></g><g fill="#9ddab5"><path d="M3.700 15.700h6v7.600h-6zM24.700 15.700h14v7.600h-14zM22.700 28.700h4v7.600h-4z" /></g></svg>
                    </div>
                    <div class="thumb">
                        <svg viewBox="0 0 55 41"><path d="M5 6h44v6H5zM5 18h44v6H5zM5 30h44v5H5z" fill="#f6f6f6" /><path d="M5 6h25v5H5zM5 18h37v5H5zM5 30h21v5H5z" fill="#d3e7dc" /><path d="M33 4.500v8M36 15v9M46 28v8" stroke="#aaa" /></svg>
                    </div>
                    <div class="thumb">
                        <svg viewBox="0 0 55 41"><circle cx="15.300" cy="27.300" r="9.700" fill="#9ddab5" /><circle cx="25.700" cy="10.700" r="5" fill="#57a586" /><circle cx="16" cy="13" r="3.400" fill="#57a586" /><circle cx="35.300" cy="11.700" r="3" fill="#9ddab5" /><circle cx="45" cy="16.300" r="6.700" fill="#fdb97d" /><circle cx="30.300" cy="21.700" r="5.700" fill="#fdb97d" /><circle cx="40" cy="27" r="3.700" fill="#ef8b2c" /><circle cx="30" cy="32.700" r="4" fill="#57a586" /></svg>
                    </div>
                </div>
                <div class="hint">
                    <p class="hint__head">For a <b>Gantt</b> view try</p>
                    <p class="hint__row">1 date <svg width="11" height="11" viewBox="0 0 11 11"><path d="M.5 2h10v8.500H.5zM.5 4.500h10M3 0v3M8 0v3" fill="none" stroke="#666" /></svg></p>
                    <p class="hint__row hint__row--pill">1 or more <span class="pill pill--dim pill--dimen">Dimen..</span></p>
                    <p class="hint__row hint__row--pill">0 to 2 <span class="pill pill--mea pill--mea-hint">Mea..</span></p>
                </div>
            </div>
        </aside>
    </main>

    <div class="tabbar">
        <div class="tabbar__source">
            <svg width="9" height="13" viewBox="0 0 9 13"><path d="M1 2.500c0-2 7-2 7 0v8c0 1.500-7 1.500-7 0zM1 4h7" fill="none" stroke="#777" /></svg>
            Data Source
        </div>
        <div class="tabbar__sheet">Sheet 1</div>
        <div class="tabbar__add"><svg width="16" height="16" viewBox="0 0 16 16"><path d="M1.500 1.500h9v10h-9z" fill="none" stroke="#777" /><path d="M4 9V7M6 9V4M8 9V6" stroke="#777" /><path d="M11 8v7M7.500 11.500h7" stroke="#555" stroke-width="1.500" /></svg></div>
        <div class="tabbar__add"><svg width="16" height="16" viewBox="0 0 16 16"><path d="M1.500 1.500h10v10h-10zM6.500 1.500v10M1.500 6.500h10" fill="none" stroke="#777" /><path d="M11 8v7M7.500 11.500h7" stroke="#555" stroke-width="1.500" /></svg></div>
        <div class="tabbar__add"><svg width="16" height="16" viewBox="0 0 16 16"><path d="M1.500 1.500l3 1 3-1v10l-3 1-3-1zM4.500 2.500v10" fill="none" stroke="#777" /><path d="M11 8v7M7.500 11.500h7" stroke="#555" stroke-width="1.500" /></svg></div>
    </div>

    <footer class="status">
        <span class="status__item">389 marks</span>
        <span class="status__item">12 rows by 1 column</span>
        <span class="status__item">SUM(Global Sales): 8,920.4</span>
        <div class="status__right">
            <i class="status__cell"></i>
            <i class="status__cell"></i>
            <i class="status__cell status__cell--wide"></i>
            <div class="status__nav">
                <svg width="8" height="8" viewBox="0 0 8 8"><path d="M0 0h1v8H0zM8 0v8L3 4z" fill="#bbb" /></svg>
                <svg width="6" height="8" viewBox="0 0 6 8"><path d="M6 0v8L1 4z" fill="#bbb" /></svg>
                <svg width="6" height="8" viewBox="0 0 6 8"><path d="M0 0v8l5-4z" fill="#bbb" /></svg>
                <svg width="8" height="8" viewBox="0 0 8 8"><path d="M7 0h1v8H7zM0 0v8l5-4z" fill="#bbb" /></svg>
            </div>
            <div class="status__views">
                <svg width="11" height="11" viewBox="0 0 11 11"><path d="M0 0h3v3H0zM4 0h3v3H4zM8 0h3v3H8zM0 4h3v3H0zM4 4h3v3H4zM8 4h3v3H8zM0 8h3v3H0zM4 8h3v3H4zM8 8h3v3H8z" fill="#bbb" /></svg>
                <svg width="11" height="11" viewBox="0 0 11 11"><path d="M0 0h11v7H0zM0 8h3v3H0zM4 8h3v3H4zM8 8h3v3H8z" fill="#bbb" /></svg>
                <svg width="11" height="11" viewBox="0 0 11 11"><path d="M0 0h11v11H0z" fill="#666" /></svg>
            </div>
        </div>
    </footer>
</body>

</html>
```

FILE: styles.css
```css
html {
    box-sizing: border-box;
}

*,
*:before,
*:after {
    box-sizing: inherit;
}

body {
    margin: 0;
    width: 2559px;
    height: 1392px;
    overflow: hidden;
    display: flex;
    flex-direction: column;
    font-family: 'Lato', 'Open Sans', sans-serif;
    font-size: 12px;
    color: #555;
    background: #222;
}

.defs {
    position: absolute;
}

/* title + menu */

.titlebar {
    height: 31px;
    flex: none;
    display: flex;
    align-items: center;
    background: #f2f2f2;
    padding-left: 2px;
}

.titlebar__icon {
    width: 22px;
    height: 22px;
    margin-right: 7px;
    display: flex;
    align-items: center;
    justify-content: center;
    background: #fff;
    border: 1px solid #d8d8d8;
}

.titlebar__text {
    font-size: 18px;
    color: #808080;
}

.winctl {
    margin-left: auto;
    margin-right: 29px;
    display: flex;
    gap: 55px;
}

.menubar {
    height: 20px;
    flex: none;
    display: flex;
    align-items: center;
    gap: 16px;
    padding-left: 7px;
    background: #fff;
    color: #8a8a8a;
    font-size: 11.7px;
}

/* toolbar */

.toolbar {
    height: 61px;
    flex: none;
    display: flex;
    align-items: center;
    gap: 16px;
    padding: 0 129px 0 17px;
    background: #f5f5f5;
}

.tool {
    width: 32px;
    height: 32px;
    flex: none;
    display: flex;
    align-items: center;
    justify-content: center;
}

.tool--menu {
    width: 44px;
    justify-content: flex-start;
}

.tool--short {
    width: 42px;
}

.tool--push {
    margin-left: auto;
}

.caret {
    display: block;
    flex: none;
    width: 0;
    height: 0;
    margin: 0 -4px 0 10px;
    border-left: 3px solid transparent;
    border-right: 3px solid transparent;
    border-top: 4px solid #777;
}

.caret--off {
    border-top-color: #bbb;
}

.caret--big {
    margin: 0;
    border-left-width: 4px;
    border-right-width: 4px;
    border-top-width: 5px;
    border-top-color: #666;
}

.sep {
    width: 1px;
    height: 35px;
    flex: none;
    margin-left: 3px;
    background: #d4d4d4;
}

.sep--tight {
    margin-right: -3px;
}

.sep--wide {
    margin-right: 0;
}

.peek {
    width: 11px;
    height: 3px;
    flex: none;
    align-self: flex-start;
    margin: 22px 0 0 9px;
    background: #7a6a96;
}

.fit-select {
    width: 106px;
    height: 33px;
    flex: none;
    margin: 0 3px 0 6px;
    display: flex;
    align-items: center;
    border: 1px solid #c9c9c9;
    border-radius: 2px;
    font-size: 14px;
    color: #555;
}

.fit-select__value {
    flex: 1;
    padding-left: 7px;
}

.fit-select__btn {
    width: 18px;
    height: 100%;
    display: flex;
    align-items: center;
    justify-content: center;
    border-left: 1px solid #dcdcdc;
}

/* workspace */

.workspace {
    position: relative;
    height: 1216px;
    flex: none;
    display: grid;
    grid-template-columns: 314px 166px 1fr;
    border-top: 1px solid #d4d4d4;
    background: #f5f5f5;
}

.datapane {
    background: #fff;
    border-right: 1px solid #d4d4d4;
    display: flex;
    flex-direction: column;
}

.datapane__tabs {
    display: flex;
    height: 39px;
    flex: none;
}

.ptab {
    position: relative;
    flex: 1;
    padding-left: 18px;
    line-height: 38px;
    font-size: 13px;
    color: #444;
    background: #f5f5f5;
    border-left: 1px solid #d4d4d4;
    border-bottom: 1px solid #d4d4d4;
}

.ptab--on {
    flex: 0 0 120px;
    padding-left: 26px;
    font-weight: 700;
    color: #222;
    background: #fff;
    border: 0;
}

.ptab__chev {
    position: absolute;
    right: 8px;
    top: 13px;
}

.source {
    height: 30px;
    flex: none;
    display: flex;
    align-items: center;
    gap: 6px;
    padding-left: 21px;
    border-bottom: 1px solid #dcdcdc;
}

.searchrow {
    height: 45px;
    flex: none;
    display: flex;
    align-items: center;
    padding: 11px 0 0 11px;
}

.search {
    width: 223px;
    height: 34px;
    flex: none;
    display: flex;
    align-items: center;
    justify-content: space-between;
    padding: 0 7px;
    border: 1px solid #d4d4d4;
    border-radius: 2px;
    color: #b5b5b5;
}

.search__filter {
    margin-left: 5px;
}

.searchrow__sep {
    width: 1px;
    height: 26px;
    margin: 0 7px 0 6px;
    background: #d8d8d8;
}

.searchrow__caret {
    margin-left: 10px;
}

.tables-title {
    margin: 16px 0 11px 26px;
    font-size: 14px;
    line-height: 16px;
    font-weight: 700;
    color: #222;
}

.fields {
    list-style: none;
    margin: 0;
    padding: 0;
    font-size: 13px;
}

.fields li {
    height: 21px;
    display: flex;
    align-items: center;
    color: #555;
}

.fields .fields__rule {
    height: 1px;
    margin: 0 6px 1px 21px;
    background: #e0e0e0;
}

.fld {
    width: 53px;
    flex: none;
    padding-left: 27px;
}

.fld--dim {
    font-size: 10px;
    color: #3f7f9f;
}

.fld--num {
    padding-left: 31px;
    font-size: 15px;
    font-weight: 300;
    color: #2f9a75;
}

/* pages, filters, marks */

.cards {
    padding: 0 6px;
    display: flex;
    flex-direction: column;
    gap: 6px;
}

.card {
    padding: 6px 6px;
    background: #f9f9f9;
    border: 1px solid #d8d8d8;
    color: #666;
    line-height: 16px;
}

.card--pages {
    height: 73px;
    border-top: 0;
    margin-bottom: 1px;
}

.card--filters {
    height: 90px;
}

.card--marks {
    height: 219px;
    padding-top: 7px;
}

.marktype {
    height: 21px;
    margin-top: 11px;
    display: flex;
    align-items: center;
    padding-left: 11px;
    gap: 6px;
    background: #fff;
    border: 1px solid #dcdcdc;
    color: #777;
}

.marktype__name {
    flex: 1;
}

.marktype__btn {
    width: 18px;
    height: 100%;
    display: flex;
    align-items: center;
    justify-content: center;
    border-left: 1px solid #dcdcdc;
}

.markgrid {
    margin-top: 6px;
    display: grid;
    grid-template-columns: repeat(3, 1fr);
    gap: 6px 6px;
}

.mark {
    height: 42px;
    display: flex;
    flex-direction: column;
    align-items: center;
    justify-content: flex-end;
    gap: 2px;
    padding-bottom: 1px;
    background: #fff;
    border: 1px solid #dcdcdc;
    font-size: 12px;
    line-height: 14px;
    color: #666;
}

/* shelves */

.main {
    min-width: 0;
    display: flex;
    flex-direction: column;
}

.shelf {
    height: 33px;
    flex: none;
    display: flex;
    align-items: center;
    gap: 2px;
    background: #fafafa;
    border-left: 1px solid #d4d4d4;
    border-bottom: 1px solid #d4d4d4;
}

.shelf--cols {
    height: 32px;
}

.shelf--rows {
    margin-top: 7px;
    border-top: 1px solid #d4d4d4;
    margin-bottom: 7px;
}

.shelf__label {
    width: 124px;
    height: 100%;
    flex: none;
    margin-right: 2px;
    display: flex;
    align-items: center;
    gap: 7px;
    padding-left: 7px;
    border-right: 1px solid #d4d4d4;
    color: #666;
}

.pill {
    width: 193px;
    height: 26px;
    display: flex;
    align-items: center;
    padding-left: 13px;
    border-radius: 13px;
    font-family: 'Open Sans', sans-serif;
    font-size: 18px;
    color: #fff;
}

.pill--mea {
    background: #00b180;
}

.pill--dim {
    background: #4996b2;
}

/* view */

.view {
    height: 1130px;
    flex: none;
    margin-right: 6px;
    display: flex;
    align-items: flex-start;
    background: #fff;
    border: 1px solid #d4d4d4;
    border-right: 1px solid #d4d4d4;
}

.sheet {
    width: 2038px;
    flex: none;
    padding-left: 9px;
}

.sheet__title {
    height: 59px;
    margin: 0;
    padding: 12px 0 0 1px;
    font-size: 30px;
    line-height: 36px;
    font-weight: 300;
    color: #444;
}

.chart {
    display: flex;
}

.heads {
    width: 158px;
    flex: none;
}

.heads__top {
    height: 20px;
    padding-left: 6px;
    font-size: 17px;
    line-height: 18px;
    font-weight: 700;
    color: #333;
}

.hrow {
    height: 100px;
    display: flex;
    align-items: stretch;
    border-top: 1px solid #c8c8c8;
}

.hrow--last {
    height: 70px;
    border-bottom: 1px solid #c8c8c8;
}

.hrow__name {
    width: 91px;
    flex: none;
    padding-left: 7px;
    font-size: 19.5px;
    font-weight: 300;
    line-height: 98px;
    color: #777;
    white-space: nowrap;
}

.hrow__axis {
    width: 19px;
    flex: none;
    text-align: left;
    writing-mode: vertical-rl;
    transform: rotate(180deg);
    padding-top: 3px;
    font-family: 'Open Sans', sans-serif;
    font-size: 15.5px;
    font-weight: 600;
    line-height: 19px;
    color: #333;
    white-space: nowrap;
}

.hrow__ticks {
    width: 40px;
    flex: none;
    padding-top: 15px;
    text-align: right;
    font-size: 18px;
    font-weight: 300;
    line-height: 31px;
    color: #777;
}

.plot {
    width: 1871px;
    flex: none;
    border-left: 1px solid #c8c8c8;
}

.plot__top {
    height: 20px;
}

.plot__body {
    position: relative;
    height: 969px;
    border-right: 1px solid #c8c8c8;
}

.plot__svg {
    display: block;
    overflow: visible;
}

.lines polyline {
    fill: none;
    stroke: #4e79a7;
    stroke-width: 3;
    stroke-linejoin: miter;
    vector-effect: non-scaling-stroke;
}

.nulls {
    position: absolute;
    right: 5px;
    bottom: 5px;
    width: 93px;
    height: 30px;
    border-radius: 3px;
    background: linear-gradient(90deg, #bdbdbd, #a8a8a8);
    color: #fff;
    font-size: 20px;
    font-weight: 700;
    line-height: 30px;
    text-align: center;
}

.axis {
    height: 71px;
    border-right: 1px solid #c8c8c8;
}

.axis__years {
    display: flex;
    padding-top: 9px;
}

.axis__years span {
    flex: 0 0 81.26px;
    text-align: center;
    font-size: 18px;
    font-weight: 300;
    line-height: 22px;
    color: #777;
}

.axis__title {
    margin-top: 11px;
    text-align: center;
    font-size: 18px;
    font-weight: 700;
    line-height: 20px;
    color: #333;
}

.vscroll {
    width: 24px;
    height: 969px;
    flex: none;
    margin: 79px 0 0 4px;
    display: flex;
    justify-content: center;
    background: #eee;
}

.vscroll__thumb {
    width: 10px;
    height: 769px;
    background: #888;
}

/* show me */

.showme {
    position: absolute;
    left: 2352px;
    top: -37px;
    width: 203px;
    height: 610px;
    display: flex;
    flex-direction: column;
    align-items: flex-end;
    color: #444;
    filter: drop-shadow(2px 2px 3px rgba(0, 0, 0, 0.3));
}

.showme__tab {
    position: relative;
    z-index: 1;
    width: 139px;
    height: 37px;
    flex: none;
    margin-bottom: -1px;
    display: flex;
    align-items: center;
    gap: 6px;
    padding: 0 0 4px 10px;
    background: #fafafa;
    border: 1px solid #dcdcdc;
    border-bottom: 0;
    font-size: 13px;
    color: #333;
}

.showme__body {
    width: 100%;
    flex: 1;
    padding: 15px 0 0 13px;
    background: #fafafa;
    border: 1px solid #dcdcdc;
}

.thumbs {
    display: grid;
    grid-template-columns: repeat(3, 56px);
    grid-auto-rows: 42px;
    gap: 4px;
}

.thumb {
    background: #fff;
    border: 1px solid #e4e4e4;
}

.thumb svg {
    display: block;
    width: 100%;
    height: 100%;
}

.thumb--on {
    border: 2px solid #e0673a;
}

.hint {
    margin-top: 17px;
    padding-left: 1px;
    font-size: 12px;
}

.hint p {
    margin: 0;
}

.hint b {
    color: #222;
}

.hint__head {
    line-height: 16px;
    margin-bottom: 13px !important;
}

.hint__row {
    display: flex;
    align-items: center;
    gap: 3px;
    height: 16px;
}

.hint__row svg {
    margin-left: 6px;
    margin-bottom: 4px;
}

.hint__row--pill {
    height: 26px;
    margin-top: 8px !important;
}

.hint__row--pill:nth-child(3) {
    margin-top: 5px !important;
}

.pill--dimen {
    width: 90px;
    font-size: 17px;
    justify-content: center;
    padding: 0;
}

.pill--mea-hint {
    width: 79px;
    font-size: 17px;
    justify-content: center;
    padding: 0;
}

/* bottom */

.tabbar {
    height: 30px;
    flex: none;
    display: flex;
    align-items: stretch;
    background: #e6e6e6;
    border-top: 1px solid #d0d0d0;
    border-bottom: 1px solid #d0d0d0;
}

.tabbar__source {
    width: 195px;
    flex: none;
    display: flex;
    align-items: center;
    gap: 7px;
    padding-left: 8px;
    font-size: 13px;
    color: #777;
}

.tabbar__sheet {
    width: 56px;
    flex: none;
    background: #fff;
    text-align: center;
    line-height: 27px;
    font-weight: 700;
    color: #555;
}

.tabbar__add {
    width: 32px;
    flex: none;
    display: flex;
    align-items: center;
    justify-content: center;
    border-right: 1px solid #d0d0d0;
}

.status {
    height: 31px;
    flex: none;
    display: flex;
    align-items: center;
    padding-left: 3px;
    background: #ececec;
    margin-bottom: 3px;
    font-size: 11.3px;
    color: #555;
}

.status__item {
    margin-right: 17px;
}

.status__right {
    margin-left: auto;
    height: 100%;
    display: flex;
    align-items: stretch;
}

.status__cell {
    width: 39px;
    border-left: 1px solid #d4d4d4;
}

.status__cell--wide {
    width: 69px;
}

.status__nav {
    width: 73px;
    display: flex;
    align-items: center;
    justify-content: space-around;
    padding: 0 4px;
    border-left: 1px solid #d4d4d4;
}

.status__views {
    width: 75px;
    display: flex;
    align-items: center;
    gap: 12px;
    padding-left: 11px;
    border-left: 1px solid #d4d4d4;
}
```
